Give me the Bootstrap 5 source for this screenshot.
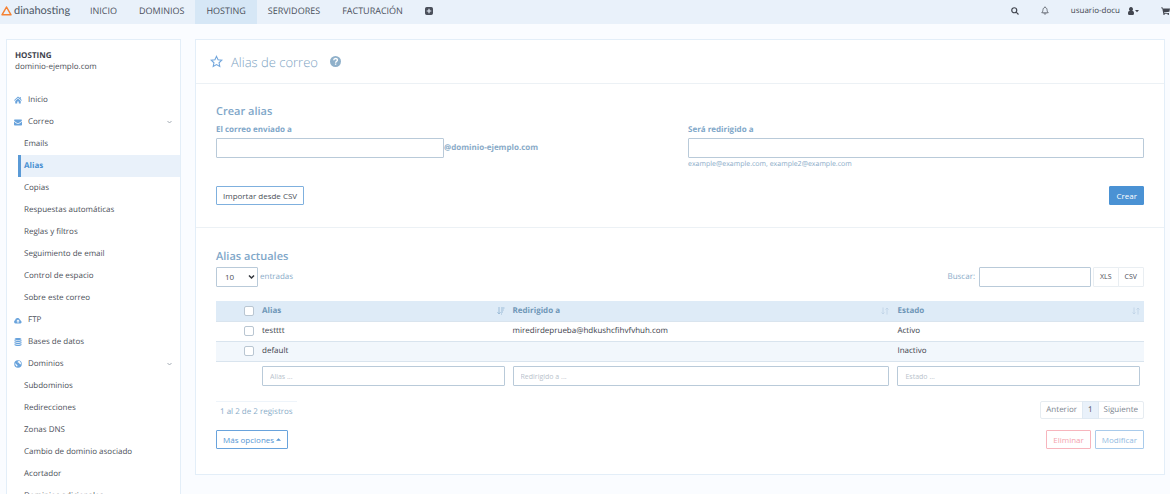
<!DOCTYPE html>
<html lang="es">
<head>
<meta charset="utf-8">
<meta name="viewport" content="width=device-width, initial-scale=1">
<title>Alias de correo - dinahosting</title>
<link href="https://cdn.jsdelivr.net/npm/bootstrap@5.3.0/dist/css/bootstrap.min.css" rel="stylesheet">
<style>
  :root { --line: #e3eef8; --field: #b9cad9; --soft: #89abc8; --blue: #4a90d2; --ink: #4b4f58; }
  body { font-family: "Open Sans", sans-serif; font-size: 8px; line-height: 12px; color: var(--ink); background: #fafcff; text-rendering: geometricPrecision; }
  a { color: inherit; text-decoration: none; }
  svg { display: block; fill: currentColor; flex: none; }

  .topbar { height: 24px; padding: 0; background: #e9f1fa; flex-wrap: nowrap; overflow: hidden; }
  .brand-link { gap: 2px; width: 79px; padding: 0 0 3px 1px; font-family: Lato, sans-serif; font-size: 11px; color: #4b5664; }
  .main-menu { font-size: 9px; }
  .main-menu a { display: flex; align-items: center; height: 24px; padding: 0 11px 3px; color: #4a4f5a; }
  .main-menu a.active { background: #d6e7f6; }
  .tools { gap: 22px; padding-bottom: 3px; color: #42464f; }
  .user-link { gap: 8px; }
  .cart-link { width: 9px; }

  .shell { gap: 14px; padding: 15px 5px 20px 6px; }
  .panel { background: #fff; border: 1px solid var(--line); }
  .side { width: 175px; flex: none; }
  .side-head { padding: 11px 8px 17px; line-height: 11px; }
  .side-head strong { display: block; line-height: 10px; color: #3d424c; }
  .side a { display: flex; align-items: center; height: 22px; }
  .side .top-item { padding: 0 8px 0 7px; }
  .side .top-item svg:first-child { color: #69a3dc; margin-right: 6px; }
  .side .chev { margin-left: auto; color: #9aa3ad; }
  .side .sub-item { margin-left: 11px; padding-left: 3px; border-left: 3px solid transparent; }
  .side .sub-item.active { background: #e9f1fa; border-color: #5a9ad6; color: var(--blue); font-weight: 700; }

  .page { min-width: 0; }
  .page-title { height: 44px; padding: 0 14px; gap: 8px; border-bottom: 1px solid #ecf1f5; color: #8fb0ca; }
  .page-title h1 { margin: 0; font-size: 13px; line-height: 18px; font-weight: 300; color: #7ea3c2; }
  .help-link { margin-left: 4px; color: #8fb0ca; }
  .create { padding: 20px 20px 22px; border-bottom: 1px solid #ecf1f5; color: var(--soft); }
  .current { padding: 21px 20px 25px; color: var(--soft); }
  h2 { margin: 0 0 4px; font-size: 11px; line-height: 16px; font-weight: 600; color: #7fa7c9; }
  .current h2 { margin-bottom: 2px; }
  .create label { display: block; font-weight: 700; margin-bottom: 2px; color: #7fa7c9; }
  .field { height: 20px; min-height: 0; padding: 0 7px; font-size: 8px; line-height: 12px; border: 1px solid var(--field); border-radius: 1px; background: #fff; color: var(--ink); }
  .field::placeholder { color: #b9c3cc; font-size: 7px; }
  .fields { --bs-gutter-x: 16px; }
  .help { font-size: 7px; margin-top: 1px; }
  .create-actions { margin-top: 15px; }
  .act { --bs-btn-padding-x: 6px; --bs-btn-padding-y: 2px; --bs-btn-font-size: 8px; --bs-btn-line-height: 13px; --bs-btn-border-radius: 1px; --bs-btn-bg: #fff; --bs-btn-border-color: #7fb0de; --bs-btn-color: #4b4f58; height: 19px; }
  .act.solid { --bs-btn-bg: #4a92d4; --bs-btn-border-color: #4a92d4; --bs-btn-color: #fff; }
  .act.more { --bs-btn-border-color: #69a3dc; --bs-btn-color: #5596d4; gap: 2px; }
  .act.drop { --bs-btn-border-color: #f7b5bd; --bs-btn-color: #f4a3ad; }
  .act.edit { --bs-btn-border-color: #a9cbeb; --bs-btn-color: #92bbe2; }
  .list-actions { margin-top: 11px; }

  .length-select { width: 42px; padding-left: 8px; padding-right: 12px; appearance: none; }
  .length-label { gap: 2px; }
  .select-wrap { position: relative; }
  .select-wrap svg { position: absolute; right: 3px; top: 7px; pointer-events: none; color: #30343b; }
  .search { width: 112px; }
  .exports { margin-left: 2px; }
  .exports .btn { padding: 0 6px; height: 20px; font-size: 7px; border: 1px solid #e9eef2; border-radius: 1px; background: #fff; color: #4b4f58; }

  .alias-table { table-layout: fixed; width: 100%; margin: 14px 0 15px; color: #3d424c; }
  .alias-table tr { border-bottom: 1px solid #d9e4ee; }
  .alias-table th, .alias-table td { height: 20px; padding: 0 4px; vertical-align: middle; }
  .alias-table thead { background: #deebf7; color: #6f97b8; }
  .alias-table tbody tr:nth-child(2) { background: #f2f7fc; }
  .alias-table tfoot tr { border: 0; }
  .alias-table tfoot td { padding-top: 4px; }
  .col-pick { width: 42px; } .col-alias { width: 27%; } .col-state { width: 27%; }
  .pick { display: block; margin: 0 0 0 auto; width: 10px; height: 10px; border: 1px solid #b9c6d2; border-radius: 2px; appearance: none; background: #fff; }
  .pick:checked { background: var(--blue); }
  .sort { color: #c0d4e6; }
  .sort.on { color: #9cbcd8; }

  .info { padding: 4px 4px 0; border-top: 1px solid #eef4fa; }
  .pagination { --bs-pagination-padding-x: 5px; --bs-pagination-padding-y: 2px; --bs-pagination-font-size: 8px; --bs-pagination-color: #7d858f; --bs-pagination-border-color: #e6ecf1; --bs-pagination-border-radius: 2px; --bs-pagination-active-bg: #e9f1fa; --bs-pagination-active-color: #4b4f58; --bs-pagination-active-border-color: #dfe9f2; margin: 0; }
</style>
</head>
<body>
<nav class="topbar navbar justify-content-between">
  <div class="d-flex">
    <a class="brand-link d-flex align-items-center" href="#">
      <svg width="11" height="10" viewBox="0 0 11 10"><path d="M5.500 1 10 8.800H1Z" fill="none" stroke="#f58233" stroke-width="1.500" stroke-linejoin="round"/></svg>
      <span>dinahosting</span>
    </a>
    <div class="main-menu d-flex">
      <a href="#">INICIO</a>
      <a href="#">DOMINIOS</a>
      <a class="active" href="#">HOSTING</a>
      <a href="#">SERVIDORES</a>
      <a href="#">FACTURACIÓN</a>
      <a href="#" aria-label="Más"><svg width="8" height="8" viewBox="0 0 14 14"><path fill-rule="evenodd" d="M3 0h8a3 3 0 0 1 3 3v8a3 3 0 0 1-3 3H3a3 3 0 0 1-3-3V3a3 3 0 0 1 3-3Zm3 3v3H3v2h3v3h2V8h3V6H8V3Z"/></svg></a>
    </div>
  </div>
  <div class="tools d-flex align-items-center">
    <a href="#" aria-label="Buscar"><svg width="8" height="8" viewBox="0 0 16 16"><path d="M6.500 1.500a5 5 0 1 0 0 10 5 5 0 0 0 0-10ZM10.300 10.300 15 15" fill="none" stroke="currentColor" stroke-width="2.400"/></svg></a>
    <a href="#" aria-label="Avisos"><svg width="8" height="9" viewBox="0 0 16 18"><path d="M8 1v2M1.500 13.500C4 11 3.700 9 4 7c.3-2.500 2-4 4-4s3.700 1.500 4 4c.3 2 0 4 2.500 6.500ZM6 14.500a2 2 0 0 0 4 0" fill="none" stroke="currentColor" stroke-width="1.400"/></svg></a>
    <a class="user-link d-flex align-items-center" href="#"><span>usuario-docu</span>
      <svg width="11" height="8" viewBox="0 0 22 16"><path d="M6 0a3.800 4.200 0 0 1 2.400 7.600C10.800 8 12 9.700 12 12.500 12 15 11 16 9.500 16h-7C1 16 0 15 0 12.500 0 9.700 1.200 8 3.600 7.600A3.800 4.200 0 0 1 6 0Zm8 6h8l-4 4.500Z"/></svg></a>
    <a class="cart-link" href="#" aria-label="Carrito"><svg width="9" height="8" viewBox="0 0 18 16"><path d="M0 1h3.600l.6 2H18l-1.200 6.500-11 1.300.3 1.200H16v1.500H4.600L2.500 2.500H0ZM6 13a1.500 1.500 0 1 1 0 3 1.500 1.500 0 0 1 0-3Zm8.500 0a1.500 1.500 0 1 1 0 3 1.500 1.500 0 0 1 0-3Z"/></svg></a>
  </div>
</nav>

<div class="shell d-flex align-items-start">
  <aside class="side panel">
    <div class="side-head"><strong>HOSTING</strong>dominio-ejemplo.com</div>
    <nav>
      <a class="top-item" href="#"><svg width="8" height="8" viewBox="0 0 16 16"><path d="M8 1 0 8.500l1 1.200 7-6.200 7 6.200 1-1.200-2.500-2.400V2h-2v2.200ZM2.500 9.800V15H6.500v-4h3v4h4V9.800L8 5Z"/></svg>Inicio</a>
      <a class="top-item" href="#"><svg width="8" height="7" viewBox="0 0 16 14"><path d="M1.500 1h13A1.500 1.500 0 0 1 16 2.500C16 3.500 10 8.500 8 8.500S0 3.500 0 2.500A1.500 1.500 0 0 1 1.500 1ZM0 5c3 2.500 6 5 8 5s5-2.500 8-5v6.500a1.500 1.500 0 0 1-1.500 1.500h-13A1.500 1.500 0 0 1 0 11.500Z"/></svg>Correo<svg class="chev" width="5" height="4" viewBox="0 0 10 8"><path d="m1 2 4 4 4-4" fill="none" stroke="currentColor" stroke-width="1.800"/></svg></a>
      <a class="sub-item" href="#">Emails</a>
      <a class="sub-item active" href="#">Alias</a>
      <a class="sub-item" href="#">Copias</a>
      <a class="sub-item" href="#">Respuestas automáticas</a>
      <a class="sub-item" href="#">Reglas y filtros</a>
      <a class="sub-item" href="#">Seguimiento de email</a>
      <a class="sub-item" href="#">Control de espacio</a>
      <a class="sub-item" href="#">Sobre este correo</a>
      <a class="top-item" href="#"><svg width="8" height="7" viewBox="0 0 18 14"><path fill-rule="evenodd" d="M4 14a4 4 0 0 1-1.500-7.600A5.500 5.500 0 0 1 13 4.500a3 3 0 0 1 2 3.200A3.300 3.300 0 0 1 14.500 14ZM9 4.500 5 8.500h2.700V12h2.600V8.500H13Z"/></svg>FTP</a>
      <a class="top-item" href="#"><svg width="8" height="8" viewBox="0 0 16 16"><path d="M8 0c4 0 7 1 7 2.200S12 4.400 8 4.400 1 3.400 1 2.200 4 0 8 0ZM1 4.200c3 1.800 11 1.800 14 0v2.300c-2 2-12 2-14 0Zm0 4c3 1.800 11 1.800 14 0v2.300c-2 2-12 2-14 0Zm0 4c3 1.800 11 1.800 14 0v1.800c-2 2.600-12 2.600-14 0Z"/></svg>Bases de datos</a>
      <a class="top-item" href="#"><svg width="8" height="8" viewBox="0 0 16 16"><path fill-rule="evenodd" d="M8 .5a7.500 7.500 0 1 1 0 15 7.500 7.500 0 0 1 0-15ZM9 2 7 4l1 1.500 2-.5.500 2L13 9l1-2-1-3-2-2ZM2 6l1 4 3 3.500 1-3L4 8Z"/></svg>Dominios<svg class="chev" width="5" height="4" viewBox="0 0 10 8"><path d="m1 2 4 4 4-4" fill="none" stroke="currentColor" stroke-width="1.800"/></svg></a>
      <a class="sub-item" href="#">Subdominios</a>
      <a class="sub-item" href="#">Redirecciones</a>
      <a class="sub-item" href="#">Zonas DNS</a>
      <a class="sub-item" href="#">Cambio de dominio asociado</a>
      <a class="sub-item" href="#">Acortador</a>
      <a class="sub-item" href="#">Dominios adicionales</a>
    </nav>
  </aside>

  <main class="page panel flex-grow-1">
    <header class="page-title d-flex align-items-center">
      <a href="#" aria-label="Favorito"><svg width="13" height="13" viewBox="0 0 24 24"><path d="m12 2.500 2.900 6.300 6.900.8-5.100 4.700 1.400 6.800L12 17.700l-6.100 3.400 1.400-6.800L2.200 9.600l6.900-.8Z" fill="none" stroke="#72a6dc" stroke-width="2"/></svg></a>
      <h1>Alias de correo</h1>
      <a class="help-link" href="#" aria-label="Ayuda"><svg width="11" height="11" viewBox="0 0 22 22"><circle cx="11" cy="11" r="11"/><path d="M7.500 8.500C7.500 4 14.800 4 14.800 8.200c0 2.800-3.600 2.800-3.600 5.300M11.200 15v2.600" fill="none" stroke="#fff" stroke-width="2.800"/></svg></a>
    </header>

    <form class="create">
      <h2>Crear alias</h2>
      <div class="fields row row-cols-2">
        <div class="col">
          <label for="sent-to">El correo enviado a</label>
          <div class="d-flex align-items-center">
            <input id="sent-to" class="field w-50" type="text">
            <strong>@dominio-ejemplo.com</strong>
          </div>
        </div>
        <div class="col">
          <label for="redirect-to">Será redirigido a</label>
          <input id="redirect-to" class="field d-block w-100" type="text">
          <div class="help">example@example.com, example2@example.com</div>
        </div>
      </div>
      <div class="create-actions d-flex justify-content-between">
        <button class="btn act" type="button">Importar desde CSV</button>
        <button class="btn act solid" type="button">Crear</button>
      </div>
    </form>

    <section class="current">
      <h2>Alias actuales</h2>
      <div class="d-flex justify-content-between">
        <label class="length-label d-flex align-items-center">
          <span class="select-wrap"><select class="field length-select"><option>10</option><option>25</option></select><svg width="7" height="6" viewBox="0 0 14 12"><path d="m2 3 5 5 5-5" fill="none" stroke="currentColor" stroke-width="3"/></svg></span>
          entradas
        </label>
        <div class="d-flex align-items-center">
          <label class="me-1" for="search">Buscar:</label>
          <input id="search" class="field search" type="search">
          <div class="exports btn-group">
            <button class="btn" type="button">XLS</button>
            <button class="btn" type="button">CSV</button>
          </div>
        </div>
      </div>

      <table class="alias-table">
        <colgroup><col class="col-pick"><col class="col-alias"><col><col class="col-state"></colgroup>
        <thead>
          <tr>
            <th><input class="pick" type="checkbox" aria-label="Seleccionar todo"></th>
            <th><div class="d-flex justify-content-between align-items-center">Alias <svg class="sort on" width="8" height="8" viewBox="0 0 16 16"><path d="M4 0v13M1 10.500 4 14l3-3.500M8 2h7M8 6h5.500M8 10h4M8 14h2" fill="none" stroke="currentColor" stroke-width="2"/></svg></div></th>
            <th><div class="d-flex justify-content-between align-items-center">Redirigido a <svg class="sort" width="8" height="8" viewBox="0 0 16 16"><path d="M4 1v13M1 11l3 3 3-3M12 15V2M9 5l3-3 3 3" fill="none" stroke="currentColor" stroke-width="1.800"/></svg></div></th>
            <th><div class="d-flex justify-content-between align-items-center">Estado <svg class="sort" width="8" height="8" viewBox="0 0 16 16"><path d="M4 1v13M1 11l3 3 3-3M12 15V2M9 5l3-3 3 3" fill="none" stroke="currentColor" stroke-width="1.800"/></svg></div></th>
          </tr>
        </thead>
        <tbody>
          <tr><td><input class="pick" type="checkbox" aria-label="Seleccionar testttt"></td><td>testttt</td><td>miredirdeprueba@hdkushcfihvfvhuh.com</td><td>Activo</td></tr>
          <tr><td><input class="pick" type="checkbox" aria-label="Seleccionar default"></td><td>default</td><td></td><td>Inactivo</td></tr>
        </tbody>
        <tfoot>
          <tr>
            <td></td>
            <td><input class="field d-block w-100" type="text" placeholder="Alias ..." aria-label="Alias"></td>
            <td><input class="field d-block w-100" type="text" placeholder="Redirigido a ..." aria-label="Redirigido a"></td>
            <td><input class="field d-block w-100" type="text" placeholder="Estado ..." aria-label="Estado"></td>
          </tr>
        </tfoot>
      </table>

      <div class="d-flex justify-content-between align-items-start">
        <div class="info">1 al 2 de 2 registros</div>
        <ul class="pagination">
          <li class="page-item"><a class="page-link" href="#">Anterior</a></li>
          <li class="page-item active"><a class="page-link" href="#">1</a></li>
          <li class="page-item"><a class="page-link" href="#">Siguiente</a></li>
        </ul>
      </div>
      <div class="list-actions d-flex justify-content-between">
        <button class="btn act more d-flex align-items-center" type="button">Más opciones <svg width="5" height="3" viewBox="0 0 10 6"><path d="M0 5.500 5 .5l5 5Z"/></svg></button>
        <div class="d-flex gap-1">
          <button class="btn act drop" type="button">Eliminar</button>
          <button class="btn act edit" type="button">Modificar</button>
        </div>
      </div>
    </section>
  </main>
</div>
</body>
</html>
